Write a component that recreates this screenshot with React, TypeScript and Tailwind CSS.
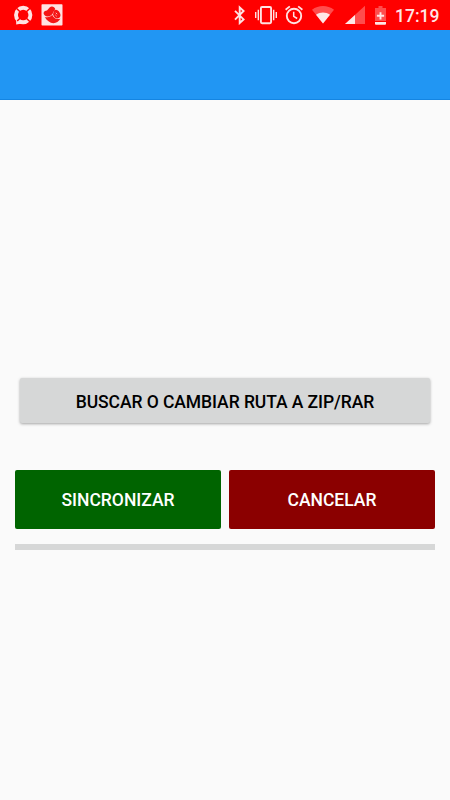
import { useState } from "react";

function ChatRingIcon() {
  return (
    <svg className="w-5 h-5" viewBox="0 0 20 20">
      <circle cx="10.2" cy="10" r="7.2" fill="none" stroke="#ffe2e2" strokeWidth="3.9" />
      <path d="M3.2 13.5 L3.2 19.6 L9 18.4 Z" fill="#ffe2e2" />
      <path d="M3.4 3.2 L7 6.8 M17 3.2 L13.4 6.8 M4.2 16 L7 13.2 M17 16.8 L13.4 13.2" stroke="#ff0000" strokeWidth="1.5" />
    </svg>
  );
}

function HandshakeIcon() {
  return (
    <svg className="w-[22px] h-[22px]" viewBox="0 0 22 22">
      <rect x="0.5" y="0.3" width="21" height="21.2" rx="0.8" fill="#ffe2e2" />
      {/* two clasped hands, fists first and then the forearm below */}
      <path d="M2.6 9.6 C2.4 7.6 4.4 6.8 6 6.6 L8.6 3.4 C10.8 1.8 13.6 2.8 14.2 5 L12.4 8 C11.4 10.8 9.4 12.6 6.6 12.6 C4.4 12.4 2.9 11.2 2.6 9.6 Z" fill="#f51616" />
      <path d="M13 6.4 C15 5 17.4 6.2 18.6 8.4 C20 10.4 19.6 12.6 18.4 13.8 L16.4 14.6 C14.2 14.4 12.4 12.4 12 10.2 Z" fill="#f51616" />
      <path d="M3.8 13 C7.6 13.8 9.8 12.6 11.2 10.8 C12.4 13.4 14.4 15.2 16.8 15 L19.4 14.8 C17.8 17.6 15.4 19.2 12.4 19.2 C9 19 5.6 16.6 3.8 13 Z" fill="#f51616" />
      <path d="M14.8 8.8 L16.2 10.2 M14.4 11 L15.6 12.2" stroke="#ffe2e2" strokeWidth="0.8" />
    </svg>
  );
}

function BluetoothIcon() {
  return (
    <svg className="w-3 h-5" viewBox="0 0 12 20">
      <path d="M1 5.8 L9.6 14.4 L5.7 18 V2.4 L9.6 6 L1 14.6" fill="none" stroke="#ffe2e2" strokeWidth="1.9" />
    </svg>
  );
}

function VibrateIcon() {
  return (
    <svg className="w-[22px] h-5" viewBox="0 0 22 20">
      <rect x="5.9" y="2" width="10.2" height="16.2" rx="1.2" fill="none" stroke="#ffe2e2" strokeWidth="1.9" />
      <path d="M3.3 4.8 V15.2 M18.7 4.8 V15.2 M0.7 7 V13 M21.3 7 V13" stroke="#ffe2e2" strokeWidth="1.4" />
    </svg>
  );
}

function AlarmIcon() {
  return (
    <svg className="w-[18px] h-5" viewBox="0 0 18 20">
      <circle cx="9" cy="11" r="7.2" fill="none" stroke="#ffe2e2" strokeWidth="1.9" />
      <path d="M0.6 4.8 L4.8 1.4 M17.4 4.8 L13.2 1.4" stroke="#ffe2e2" strokeWidth="1.8" />
      <path d="M8.7 6.8 V11.3 L12.2 13.5" fill="none" stroke="#ffe2e2" strokeWidth="1.5" />
    </svg>
  );
}

function WifiIcon() {
  return (
    <svg className="w-[22px] h-5" viewBox="0 0 22 20">
      <path d="M11 18.5 L0 4.8 C6.6 -0.2 15.4 -0.2 22 4.8 Z" fill="#ff4d4d" />
      <path d="M11 18.5 L4 9.7 C8.2 6.6 13.8 6.6 18 9.7 Z" fill="#ffe6e6" />
    </svg>
  );
}

function SignalIcon() {
  return (
    <svg className="w-5 h-5" viewBox="0 0 20 20">
      <path d="M0 19 L20 0.8 V19 Z" fill="#ff4d4d" />
      <path d="M0 19 L10 9.9 V19 Z" fill="#ffe6e6" />
    </svg>
  );
}

function BatteryIcon() {
  return (
    <svg className="w-[11px] h-5" viewBox="0 0 11 20">
      <path d="M3.5 1 H7.5 V3 H11 V16 H0 V3 H3.5 Z" fill="#ff4d4d" />
      <path d="M0 17 H11 V18.8 Q11 19.8 10 19.8 H1 Q0 19.8 0 18.8 Z" fill="#ffe6e6" />
      <path d="M5.5 7.2 V14.4 M1.9 10.8 H9.1" stroke="#ffe6e6" strokeWidth="1.9" />
    </svg>
  );
}

function StatusBar() {
  return (
    <div className="flex h-[30px] items-center bg-[#ff0000] pl-[12.5px] pr-[10px]">
      <ChatRingIcon />
      <div className="ml-[8.5px]">
        <HandshakeIcon />
      </div>
      <div className="ml-auto flex items-center">
        <BluetoothIcon />
        <div className="ml-[9px]"><VibrateIcon /></div>
        <div className="ml-2"><AlarmIcon /></div>
        <div className="ml-[9px]"><WifiIcon /></div>
        <div className="ml-[11px]"><SignalIcon /></div>
        <div className="ml-[10px]"><BatteryIcon /></div>
        <span className="ml-[9px] w-[45px] whitespace-nowrap pt-0.5 text-[17.5px] leading-5 font-medium text-[#ffe6e6]">17:19</span>
      </div>
    </div>
  );
}

export default function App() {
  const [progress, setProgress] = useState(0);

  return (
    <div className="flex h-[800px] w-[450px] flex-col overflow-hidden bg-[#fafafa] font-['Roboto',sans-serif]">
      <StatusBar />
      <header className="h-[70px] border-b border-[#1485e2] bg-[#2196f3]" />

      <main className="flex flex-col px-[15px] pt-[278px]">
        <button className="mx-[5px] h-[45px] rounded-[2px] bg-[#d6d7d7] pt-[3px] text-[17.5px] font-medium tracking-[-0.07px] text-black shadow-[0_1px_3px_rgba(0,0,0,0.35)]">
          BUSCAR O CAMBIAR RUTA A ZIP/RAR
        </button>

        <div className="mt-[47px] flex gap-2">
          <button onClick={() => setProgress(100)} className="h-[59px] flex-1 rounded-[2px] bg-[#006400] pt-[2px] text-[17.5px] font-medium text-white">
            SINCRONIZAR
          </button>
          <button onClick={() => setProgress(0)} className="h-[59px] flex-1 rounded-[2px] bg-[#8b0000] pt-[2px] text-[17.5px] font-medium text-white">
            CANCELAR
          </button>
        </div>

        <div className="mt-[15px] h-[5.5px] bg-[#d6d7d7]">
          <div className="h-full bg-[#2196f3]" style={{ width: `${progress}%` }} />
        </div>
      </main>
    </div>
  );
}
